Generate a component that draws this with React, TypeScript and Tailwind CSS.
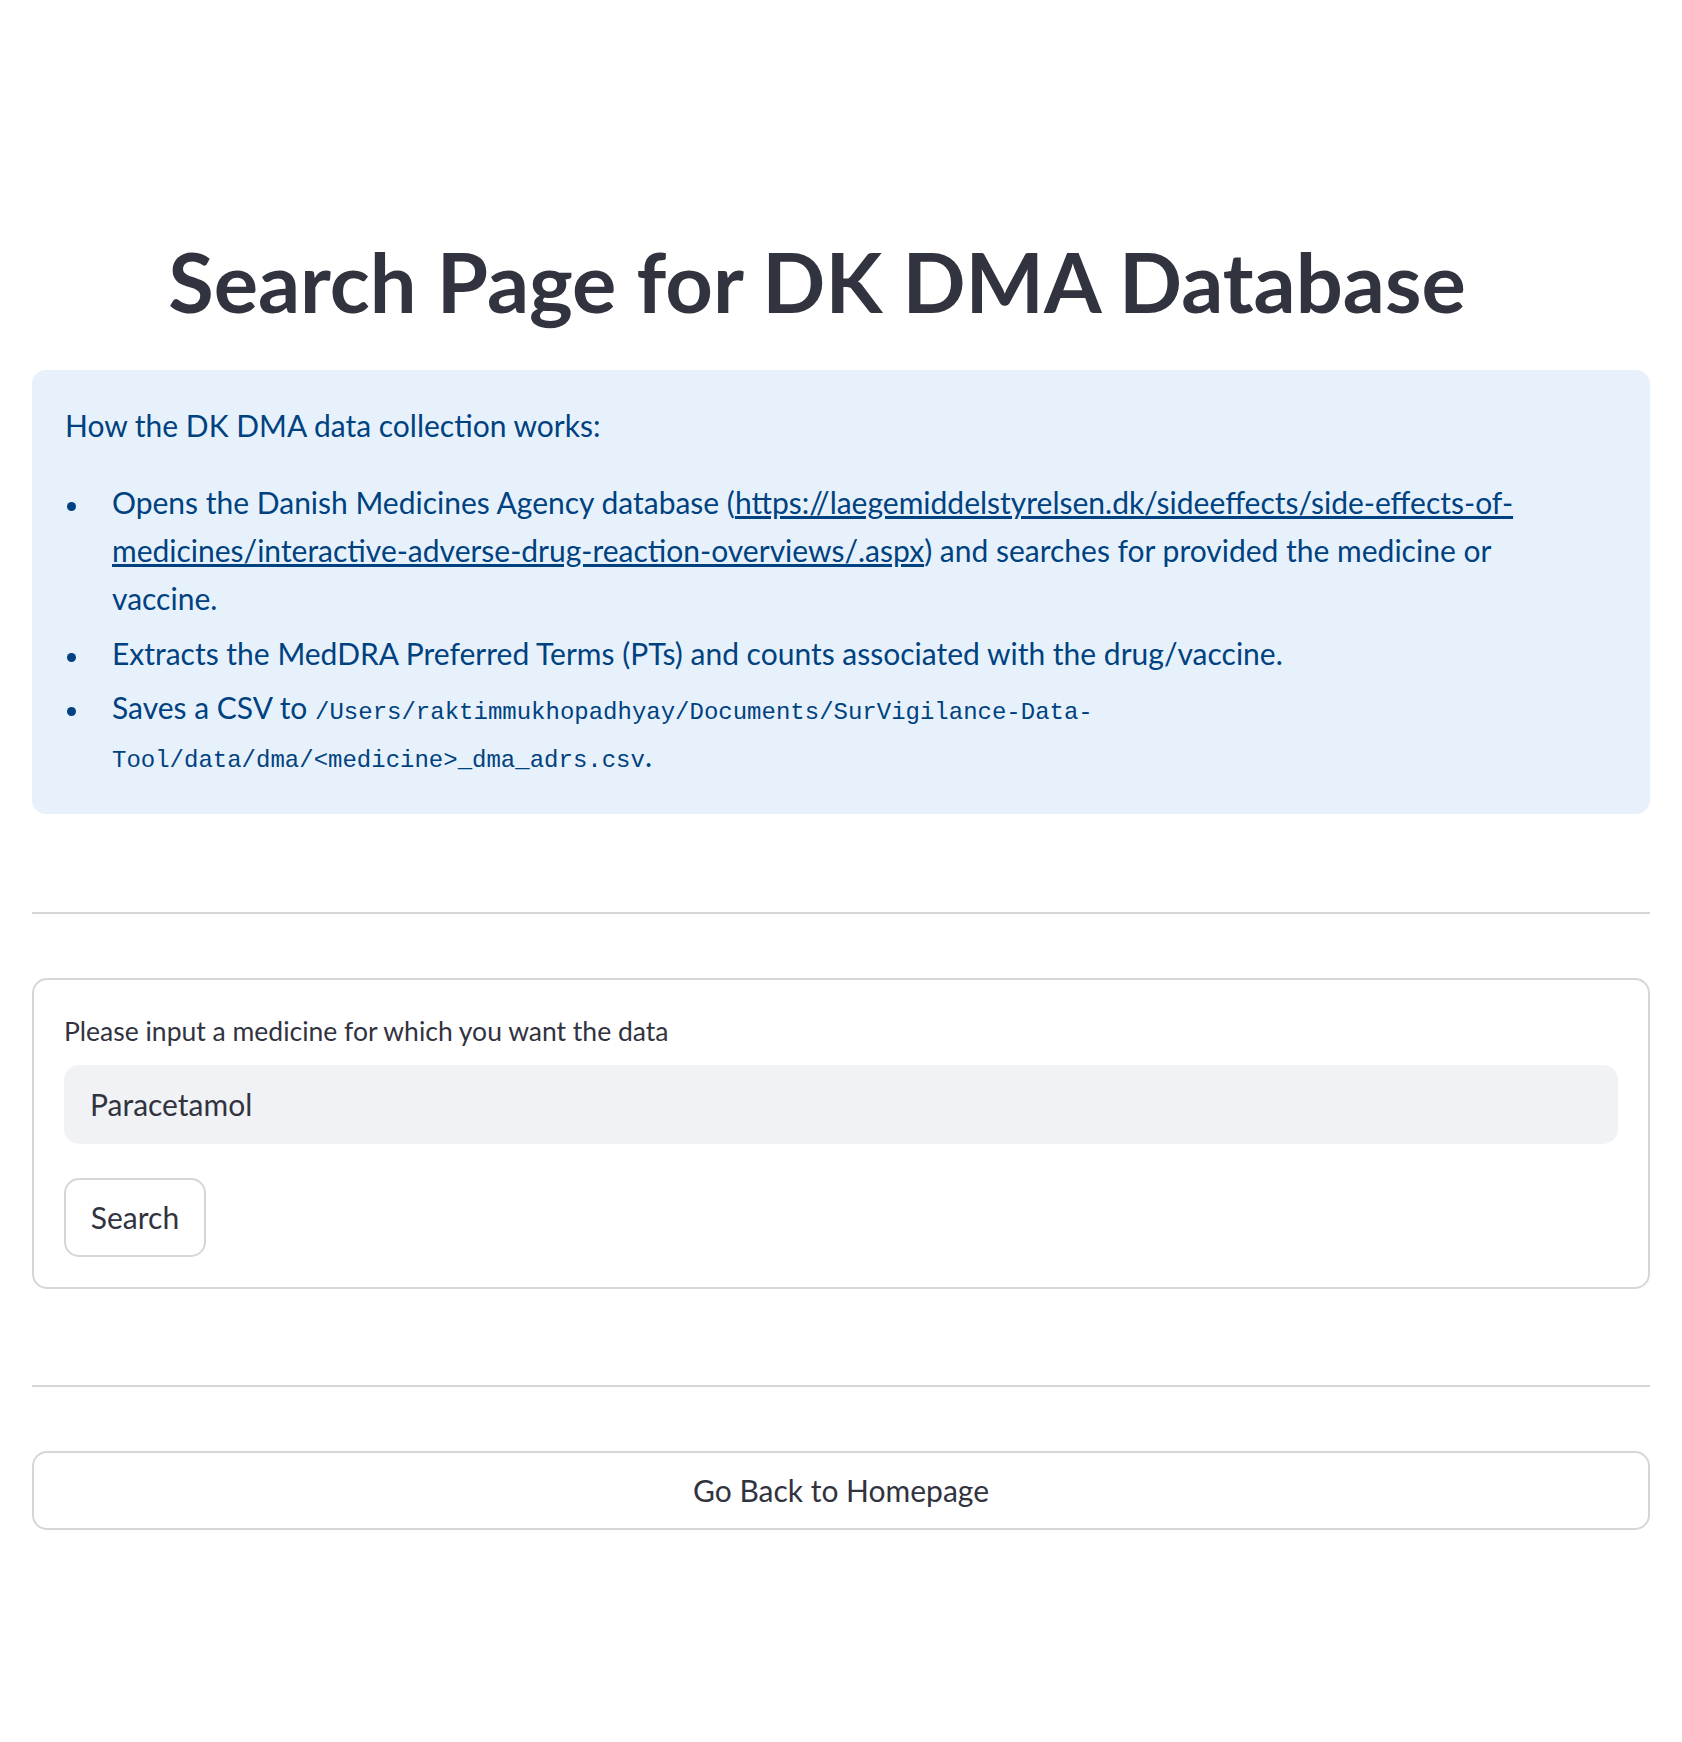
import React from "react";

const sans = { fontFamily: "Lato, 'Noto Sans', sans-serif" };

export default function App() {
  return (
    <div className="min-h-[1742px] bg-white px-[32px] pt-[232px] text-[#31333F]" style={sans}>
      <h1 className="flex justify-center pr-[48px] text-[83px] font-bold leading-[99px] text-[#31333F]">
        Search Page for DK DMA Database
      </h1>

      <div className="mt-[39px] rounded-[14px] bg-[#e7f1fc] pb-[35px] pl-[33px] pr-[80px] pt-[31px] text-[30px] leading-[48px] text-[#004280]">
        <p className="mb-[29px]">How the DK DMA data collection works:</p>
        <ul>
          <li className="flex">
            <span className="w-[47px] shrink-0">
              <span className="ml-[2px] mt-[24px] block h-[9px] w-[9px] rounded-full bg-[#004280]" />
            </span>
            <span>
              Opens the Danish Medicines Agency database (
              <a className="underline" href="#">
                https://laegemiddelstyrelsen.dk/sideeffects/side-effects-of-medicines/interactive-adverse-drug-reaction-overviews/.aspx
              </a>
              ) and searches for provided the medicine or vaccine.
            </span>
          </li>
          <li className="mt-[7px] flex">
            <span className="w-[47px] shrink-0">
              <span className="ml-[2px] mt-[24px] block h-[9px] w-[9px] rounded-full bg-[#004280]" />
            </span>
            <span>Extracts the MedDRA Preferred Terms (PTs) and counts associated with the drug/vaccine.</span>
          </li>
          <li className="mt-[6px] flex">
            <span className="w-[47px] shrink-0">
              <span className="ml-[2px] mt-[24px] block h-[9px] w-[9px] rounded-full bg-[#004280]" />
            </span>
            <span>
              Saves a CSV to{" "}
              <code className="text-[24px] leading-none" style={{ fontFamily: "'Liberation Mono', 'DejaVu Sans Mono', monospace" }}>
                /Users/raktimmukhopadhyay/Documents/SurVigilance-Data-Tool/data/dma/&lt;medicine&gt;_dma_adrs.csv
              </code>
              .
            </span>
          </li>
        </ul>
      </div>

      <div className="mt-[98px] h-[2px] bg-[#d6d6d9]" />

      <div className="mt-[64px] rounded-[15px] border-2 border-[#d6d6d9] px-[30px] pb-[30px] pt-[30px]">
        <div className="text-[26.5px] leading-[42px] text-[#31333F]">Please input a medicine for which you want the data</div>
        <div className="mt-[13px] flex h-[79px] items-center rounded-[15px] bg-[#f0f2f6] pl-[26px] text-[30px] text-[#31333F]">
          Paracetamol
        </div>
        <button className="mt-[34px] flex h-[79px] w-[142px] items-center justify-center rounded-[15px] border-2 border-[#d6d6d9] bg-white text-[30px] text-[#31333F]">
          Search
        </button>
      </div>

      <div className="mt-[96px] h-[2px] bg-[#d6d6d9]" />

      <button className="mt-[64px] flex h-[79px] w-full items-center justify-center rounded-[15px] border-2 border-[#d6d6d9] bg-white text-[30px] text-[#31333F]">
        Go Back to Homepage
      </button>
    </div>
  );
}
